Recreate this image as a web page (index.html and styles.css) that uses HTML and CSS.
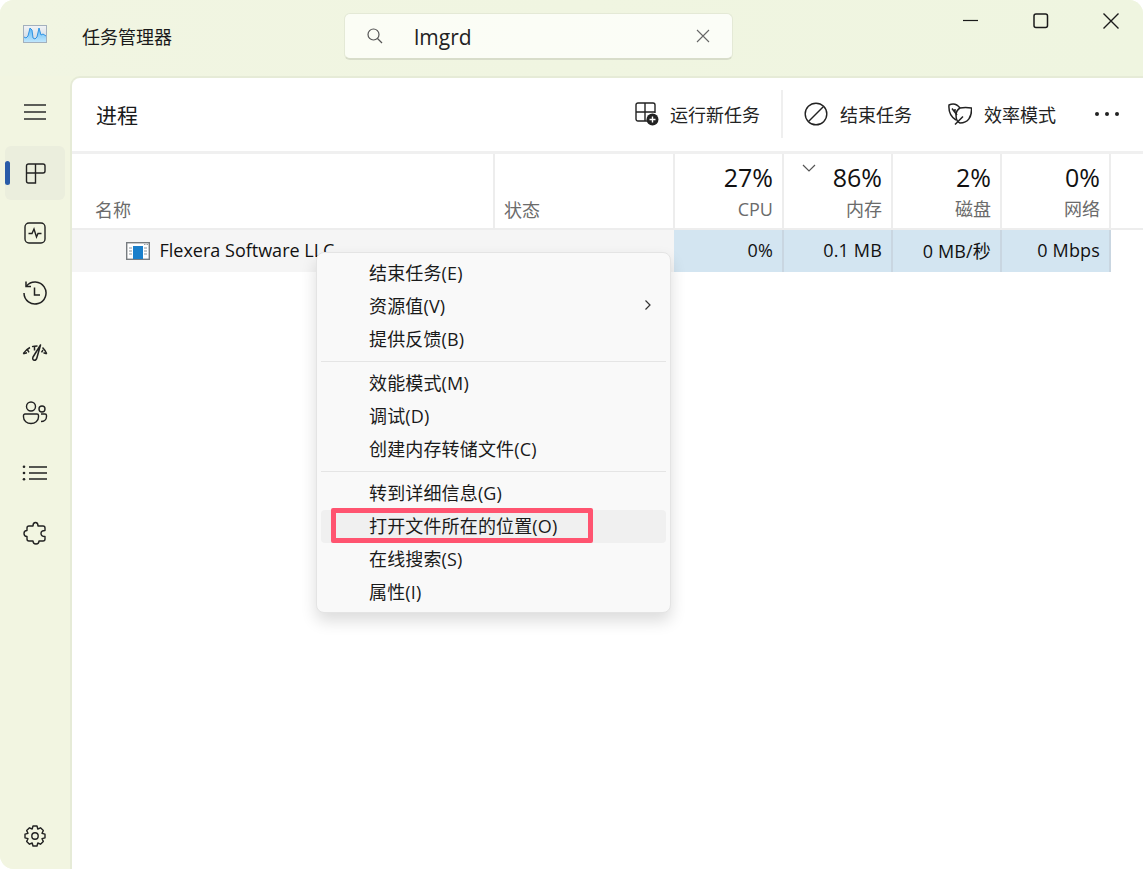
FILE: index.html
```html
<!DOCTYPE html>
<html lang="zh-CN">
<head>
<meta charset="utf-8">
<title>任务管理器</title>
<link rel="stylesheet" href="styles.css">
</head>
<body>
<div class="window">
  <header class="titlebar">
    <svg class="app-icon" width="24" height="18" viewBox="0 0 24 18">
      <defs>
        <linearGradient id="appbg" x1="0" y1="0" x2="0" y2="1"><stop offset="0" stop-color="#f2f4f6"/><stop offset="1" stop-color="#c9d3de"/></linearGradient>
        <linearGradient id="appfill" x1="0" y1="0" x2="0" y2="1"><stop offset="0" stop-color="#5cb8f5"/><stop offset="1" stop-color="#bfe6fc"/></linearGradient>
      </defs>
      <rect x=".5" y=".5" width="23" height="17" fill="url(#appbg)" stroke="#a3b0bd"/>
      <path d="M1 17V12L3 13 5 11 7 3 9 5 10 13 12 14 14 12 16 3 18 10 20 9 23 11V17Z" fill="url(#appfill)"/>
      <path d="M1 12L3 13 5 11 7 3 9 5 10 13 12 14 14 12 16 3 18 10 20 9 23 11" fill="none" stroke="#2f93e3" stroke-width="1"/>
    </svg>
    <div class="app-title">任务管理器</div>
    <div class="search">
      <svg class="search-icon" width="18" height="18" viewBox="0 0 18 18" fill="none" stroke="#555" stroke-width="1.2"><circle cx="7.500" cy="7.500" r="5.500"/><path d="M11.500 11.500L16 16"/></svg>
      <span class="search-text">lmgrd</span>
      <svg class="search-clear" width="14" height="14" viewBox="0 0 14 14" fill="none" stroke="#666" stroke-width="1.1"><path d="M1 1L13 13M13 1L1 13"/></svg>
    </div>
    <div class="win-controls">
      <svg class="win-btn" width="16" height="16" viewBox="0 0 16 16" fill="none" stroke="#1a1a1a" stroke-width="1.2"><path d="M0 7.500H15"/></svg>
      <svg class="win-btn" width="16" height="16" viewBox="0 0 16 16" fill="none" stroke="#1a1a1a" stroke-width="1.5"><rect x="1" y="1" width="13.500" height="13.500" rx="2"/></svg>
      <svg class="win-btn" width="16" height="16" viewBox="0 0 16 16" fill="none" stroke="#1a1a1a" stroke-width="1.4"><path d="M.5 .5L15.500 15.500M15.500 .5L.5 15.500"/></svg>
    </div>
  </header>
  <div class="content">
    <nav class="sidebar">
      <div class="nav-item nav-burger">
        <svg width="24" height="20" viewBox="0 0 24 20" fill="none" stroke="#2b2b2b" stroke-width="1.400"><path d="M1 3H23M1 10H23M1 17H23"/></svg>
      </div>
      <div class="nav-item">
        <div class="nav-active"><span class="nav-pill"></span>
          <svg width="22" height="22" viewBox="0 0 22 22" fill="none" stroke="#222" stroke-width="1.400"><path d="M2.500 4A2 2 0 0 1 4.500 2H19A2 2 0 0 1 21 4V9A2 2 0 0 1 19 11H11.500V21H4.500A2 2 0 0 1 2.500 19Z"/><path d="M11.500 2V11M2.500 11H11.500"/></svg>
        </div>
      </div>
      <div class="nav-item">
        <svg width="22" height="22" viewBox="0 0 22 22" fill="none" stroke="#222" stroke-width="1.400"><rect x="1" y="1" width="20" height="20" rx="4"/><path d="M4.500 11.500H8L10 7 12.500 15 14 11.500H17.500"/></svg>
      </div>
      <div class="nav-item">
        <svg width="26" height="26" viewBox="0 0 26 26" fill="none" stroke="#222" stroke-width="1.500"><path d="M4.500 6A11 11 0 1 1 2 13"/><path d="M4 1.500V6.500H9"/><path d="M12.500 7.500V15H18"/></svg>
      </div>
      <div class="nav-item">
        <svg width="26" height="20" viewBox="0 0 26 20" fill="none" stroke="#222" stroke-width="1.500" stroke-linejoin="round"><path d="M1.300 10.700C3 8 5 6 8 4.500M10 3.600C11.500 3.200 13 3 15.500 3M20.500 4.500C22 6 23.500 8 24.700 10.700"/><path d="M1.300 10.700L5 9.800M5.500 6.800L7 9.300M24.700 10.700L21.500 9.800M21 7L19.500 9.300M12.500 3.200V7.500"/><path d="M18.500 2L15 14.500C14 18.500 9.500 18 11 14Z"/></svg>
      </div>
      <div class="nav-item">
        <svg width="26" height="24" viewBox="0 0 26 24" fill="none" stroke="#222" stroke-width="1.400"><circle cx="9" cy="5.500" r="4.500"/><circle cx="20" cy="8" r="3"/><path d="M1.500 14.500A1.500 1.500 0 0 1 3 13H15A1.500 1.500 0 0 1 16.500 14.500V16C16.500 20 13 22.500 9 22.500S1.500 20 1.500 16Z"/><path d="M19 13H23A1.500 1.500 0 0 1 24.500 14.500V15.500C24.500 18.500 22 20.500 19 20.500"/></svg>
      </div>
      <div class="nav-item">
        <svg width="26" height="18" viewBox="0 0 26 18" fill="none" stroke="#222" stroke-width="1.400"><path d="M7 3H25M7 9H25M7 15H25"/><circle cx="2" cy="2.800" r="1.300" fill="#222" stroke="none"/><circle cx="2" cy="9" r="1.300" fill="#222" stroke="none"/><circle cx="2" cy="15.200" r="1.300" fill="#222" stroke="none"/></svg>
      </div>
      <div class="nav-item">
        <svg width="24" height="24" viewBox="0 0 24 24" fill="none" stroke="#222" stroke-width="1.400" stroke-linejoin="round"><path d="M10 5C10 2.500 11 1.500 12.500 1.500S15 3 15 5H20Q22 5 22 7V9.500C19.500 9.500 18 10.500 18 12.500S19.500 15.500 22 15.500V18Q22 20 20 20H16C16 22 14.500 23 13 23S10 22 10 20H6Q4 20 4 18V15.500C2 15.500 1 14 1 12.500S2 9.500 4 9.500V7Q4 5 6 5Z"/></svg>
      </div>
      <div class="nav-item nav-settings">
        <svg width="24" height="24" viewBox="0 0 24 24" fill="none" stroke="#222" stroke-width="1.400"><circle cx="12" cy="12" r="3.200"/><path d="M10 2H14L14.800 5 17.500 3.800 20.300 6.600 19 9.300 22 10.200V13.800L19 14.700 20.300 17.400 17.500 20.200 14.800 19 14 22H10L9.200 19 6.500 20.200 3.700 17.400 5 14.700 2 13.800V10.200L5 9.300 3.700 6.600 6.500 3.800 9.200 5Z" stroke-linejoin="round"/></svg>
      </div>
    </nav>
    <main class="panel">
      <div class="toolbar">
        <h1 class="page-title">进程</h1>
        <div class="tools">
          <div class="tool tool-run">
            <svg width="24" height="24" viewBox="0 0 24 24" fill="none" stroke="#222" stroke-width="1.400"><path d="M13 19H3A2 2 0 0 1 1 17V3A2 2 0 0 1 3 1H18A2 2 0 0 1 20 3V11"/><path d="M1 10H10M10 1V19M10 10H20"/><circle cx="17.500" cy="17.500" r="6" fill="#222" stroke="none"/><path d="M17.500 14.500V20.500M14.500 17.500H20.500" stroke="#fff"/></svg>
            <span>运行新任务</span>
          </div>
          <div class="tool-sep"></div>
          <div class="tool tool-end">
            <svg width="24" height="24" viewBox="0 0 24 24" fill="none" stroke="#222" stroke-width="1.400"><circle cx="12" cy="12" r="10.800"/><path d="M4.500 19.500L19.500 4.500"/></svg>
            <span>结束任务</span>
          </div>
          <div class="tool tool-eco">
            <svg width="24" height="22" viewBox="0 0 24 22" fill="none" stroke="#222" stroke-width="1.500" stroke-linejoin="round"><path d="M12 5C9 1 5 0 1 2C.5 8 3 14 8 17"/><path d="M12 5C15 4.500 20 4.500 23.500 5C24 14 20 20 12 20C9 19 8 15 8 12C8 9 9.500 6.500 12 5Z"/><path d="M7 21.500L15 13.500M4 5.500L9 12M7 6V9.500"/></svg>
            <span>效率模式</span>
          </div>
          <div class="more"><i></i><i></i><i></i></div>
        </div>
      </div>
      <div class="table">
        <div class="thead">
          <div class="th th-name">名称</div>
          <div class="th th-status">状态</div>
          <div class="th th-num"><b>27%</b><span>CPU</span></div>
          <div class="th th-num">
            <svg class="sort" width="14" height="8" viewBox="0 0 14 8" fill="none" stroke="#555" stroke-width="1.200"><path d="M1 1L7 7 13 1"/></svg>
            <b>86%</b><span>内存</span>
          </div>
          <div class="th th-num"><b>2%</b><span>磁盘</span></div>
          <div class="th th-num"><b>0%</b><span>网络</span></div>
          <div class="th th-end"></div>
        </div>
        <div class="tr">
          <div class="td td-name">
            <svg width="24" height="18" viewBox="0 0 24 18"><rect x=".7" y=".7" width="22.600" height="16.600" fill="#fff" stroke="#777c80" stroke-width="1.400"/><path d="M18 2.500H19.500M20.500 2.500H22" stroke="#9aa0a4"/><path d="M3 6H6M3 9H6M3 12H6M18 6H21M18 9H21M18 12H21" stroke="#8f969b"/><rect x="7" y="4" width="10" height="13" fill="#1a7fcb"/></svg>
            <span>Flexera Software LLC</span>
          </div>
          <div class="td td-status"></div>
          <div class="td td-num">0%</div>
          <div class="td td-num">0.1 MB</div>
          <div class="td td-num">0 MB/秒</div>
          <div class="td td-num">0 Mbps</div>
        </div>
      </div>
      <div class="menu">
        <div class="mi">结束任务(E)</div>
        <div class="mi mi-sub">资源值(V)
          <svg width="8" height="12" viewBox="0 0 8 12" fill="none" stroke="#333" stroke-width="1.200"><path d="M1.500 1.500L6 6 1.500 10.500"/></svg>
        </div>
        <div class="mi">提供反馈(B)</div>
        <div class="msep"></div>
        <div class="mi">效能模式(M)</div>
        <div class="mi">调试(D)</div>
        <div class="mi">创建内存转储文件(C)</div>
        <div class="msep"></div>
        <div class="mi">转到详细信息(G)</div>
        <div class="mi mi-hover">打开文件所在的位置(O)<span class="redbox"></span></div>
        <div class="mi">在线搜索(S)</div>
        <div class="mi">属性(I)</div>
      </div>
    </main>
  </div>
</div>
</body>
</html>
```
FILE: styles.css
```css
* { box-sizing: border-box; }
html, body { margin: 0; height: 100%; background: #fff; }
body {
  font-family: "Open Sans", "Noto Sans CJK SC", sans-serif;
  color: #1a1a1a;
  overflow: hidden;
}
.window {
  width: 1143px;
  height: 869px;
  display: flex;
  flex-direction: column;
  background: #f1f6e1;
  border-radius: 14px 14px 0 14px;
  overflow: hidden;
}
.titlebar {
  height: 76px;
  flex: none;
  display: flex;
  align-items: flex-start;
  background: linear-gradient(90deg, #f1f5e2, #eff5e0);
}
.app-icon { margin: 25px 0 0 23px; }
.app-title { margin: 24px 0 0 35px; width: 262px; font-size: 18px; line-height: 25px; font-family: "Noto Sans CJK SC", sans-serif; }
.search {
  width: 389px;
  height: 47px;
  margin-top: 13px;
  display: flex;
  align-items: center;
  background: linear-gradient(90deg, #fbfdf5, #fbfdf7);
  border: 1px solid #e4e9d6;
  border-bottom: 2px solid #d8ddca;
  border-radius: 6px;
}
.search-icon { margin-left: 21px; }
.search-text { margin: 2px 0 0 30px; font-size: 21px; line-height: 30px; flex: 1; color: #222; }
.search-clear { margin-right: 22px; }
.win-controls { margin-left: auto; display: flex; gap: 54px; padding: 13px 24px 0 0; }
.win-btn { display: block; }

.content { flex: 1; display: flex; min-height: 0; }
.sidebar { width: 70px; flex: none; display: flex; flex-direction: column; padding-top: 6px; padding-bottom: 3px; background: #f2f5e1; }
.nav-item { height: 60px; flex: none; display: flex; align-items: center; justify-content: center; width: 70px; }
.nav-burger { margin-bottom: 1px; }
.nav-settings { margin-top: auto; }
.nav-active {
  position: relative;
  width: 60px;
  height: 54px;
  background: #ebeedd;
  border-radius: 6px;
  display: flex;
  align-items: center;
  justify-content: center;
}
.nav-pill { position: absolute; left: 0; top: 15px; width: 5px; height: 24px; border-radius: 3px; background: #2a5ca8; }

.panel {
  position: relative;
  flex: 1;
  display: flex;
  flex-direction: column;
  background: #fff;
  border-top: 2px solid #e6ebd7;
  border-left: 2px solid #e6ebd7;
  border-top-left-radius: 10px;
}
.toolbar {
  height: 76px;
  flex: none;
  display: flex;
  align-items: center;
  border-bottom: 3px solid #f0f0f0;
  padding-left: 24px;
}
.page-title { margin: 0 0 1px; font-size: 21px; font-weight: 400; line-height: 30px; font-family: "Noto Sans CJK SC", sans-serif; }
.tools { margin: 0 0 2px auto; display: flex; align-items: center; height: 48px; padding-right: 24px; font-family: "Noto Sans CJK SC", sans-serif; font-size: 18px; color: #222; }
.tool { display: flex; align-items: center; gap: 11px; }
.tool-sep { width: 2px; height: 48px; background: #efefef; margin: 0 21px 0 21px; }
.tool-end { gap: 12px; }
.tool-eco { gap: 12px; margin-left: 36px; }
.more { margin-left: 39px; display: flex; gap: 6px; }
.more i { display: block; width: 4px; height: 4px; border-radius: 50%; background: #222; }

.thead, .tr {
  display: grid;
  grid-template-columns: 423px 180px 109px 109px 109px 109px 32px;
}
.tr { grid-template-columns: 423px 179px 110px 109px 109px 109px; }
.thead { height: 76px; border-bottom: 2px solid #ededed; }
.th { position: relative; border-right: 2px solid #ededed; }
.th-name, .th-status { color: #6b6b6b; font-size: 18px; line-height: 24px; padding-top: 43px; font-family: "Noto Sans CJK SC", sans-serif; }
.th-name { padding-left: 23px; }
.th-status { padding-left: 9px; }
.th-end { border-right: 0; }
.th-num { display: flex; flex-direction: column; align-items: flex-end; padding: 6px 9px 0 0; }
.th-num b { font-weight: 400; font-size: 25px; line-height: 35px; color: #111; }
.th-num span { font-size: 18px; line-height: 28px; color: #6b6b6b; }
.sort { position: absolute; left: 18px; top: 10px; }
.tr { height: 42px; }
.td { display: flex; align-items: center; font-size: 18px; color: #111; padding-bottom: 2px; }
.td-name { background: #f5f5f5; padding-left: 54px; gap: 9.500px; padding-bottom: 0; }
.td-name span { margin-bottom: 2px; }
.td-status { background: #f5f5f5; }
.td-num { background: #d3e5f1; border-right: 2px solid #c9d6e1; justify-content: flex-end; padding-right: 9px; letter-spacing: .15px; }

.menu {
  position: absolute;
  left: 244px;
  top: 174px;
  width: 355px;
  height: 361px;
  padding: 4px;
  background: #f9f9f9;
  border: 1px solid #e4e4e4;
  border-radius: 8px;
  box-shadow: 0 8px 16px rgba(0, 0, 0, .14);
  font-size: 18px;
  letter-spacing: .15px;
  color: #1a1a1a;
}
.mi {
  position: relative;
  height: 33px;
  display: flex;
  align-items: center;
  justify-content: space-between;
  padding: 0 14px 4px 48px;
  border-radius: 4px;
  white-space: nowrap;
}
.mi-hover { background: #f0f0f0; }
.redbox { position: absolute; left: 10px; top: -2px; width: 262px; height: 35px; border: 5px solid #ff5470; border-radius: 2px; }
.msep { height: 1px; background: #e5e5e5; margin: 5px 0; }
```
